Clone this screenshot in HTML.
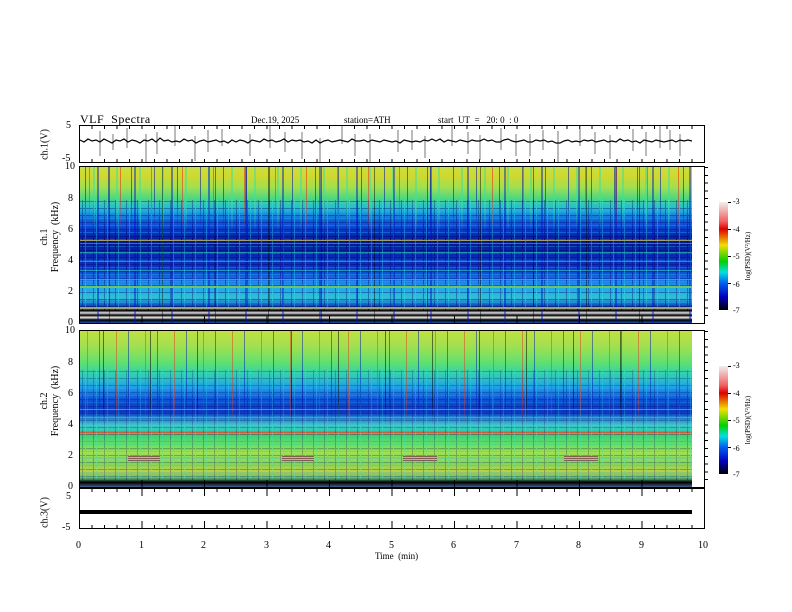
<!DOCTYPE html>
<html><head><meta charset="utf-8"><style>
body{margin:0;width:792px;height:612px;background:#fff;position:relative;overflow:hidden;font-family:"Liberation Serif",serif;color:#000}
.a{position:absolute}
.t{position:absolute;font-size:10px;line-height:10px}
.frame{position:absolute;border:1px solid #000;box-sizing:border-box}
.sp{position:absolute;left:80px;width:612px;overflow:hidden}
.xt{position:absolute;left:79px;width:625px;height:4px;background:repeating-linear-gradient(90deg,#000 0 1px,transparent 1px 12.5px)}
.xT{position:absolute;left:79px;width:625px;height:8px;background:repeating-linear-gradient(90deg,#000 0 1px,transparent 1px 62.5px)}
.yt{position:absolute;left:704px;width:4px;background:repeating-linear-gradient(180deg,#000 0 1px,transparent 1px 7.8px)}
.rot{position:absolute;transform:rotate(-90deg);transform-origin:center;white-space:nowrap;font-size:10px}
.grain{position:absolute;left:80px;width:612px;opacity:.35;background:repeating-linear-gradient(90deg,transparent 0 2px,#000060 2px 3px,transparent 3px 5px,#30e0e0 5px 6px,transparent 6px 11px),repeating-linear-gradient(180deg,transparent 0 1px,#000050 1px 2px,transparent 2px 4px,#20c0f0 4px 5px,transparent 5px 7px)}
</style></head><body>

<div class="t" style="left:80px;top:114px;font-size:12px;letter-spacing:0.5px">VLF&nbsp; Spectra</div>
<div class="t" style="left:251px;top:115px;font-size:9px">Dec.19, 2025</div>
<div class="t" style="left:344px;top:115px;font-size:9px">station=ATH</div>
<div class="t" style="left:438px;top:115px;font-size:9px">start&nbsp; UT&nbsp; =&nbsp;&nbsp; 20: 0&nbsp; : 0</div>

<!-- ch1 -->
<div class="frame" style="left:79px;top:125px;width:626px;height:38px"></div>
<div class="xt" style="top:125px"></div><div class="xt" style="top:159px"></div>
<svg class="a" style="left:80px;top:126px" width="612" height="36">
<g stroke="#777" stroke-width="1">
<path d="M20 5V30M47 2V22M66 8V36M95 0V20M115 10V35M142 3V20M170 8V30M190 0V22M222 6V33M240 12V36M262 0V18M290 8V36M318 4V26M345 10V32M372 0V20M400 9V34M421 2V24M450 8V30M478 5V36M500 0V20M530 9V33M553 3V25M580 0V22M600 8V30M33 8V24M77 6V28M128 4V26M205 6V26M275 8V30M332 4V24M388 6V28M436 8V30M463 4V24M515 6V28M566 6V30M590 4V24"/>
</g>
<polyline fill="none" stroke="#000" stroke-width="1.2" points="0,14 4,16 8,13 12,15 16,14 20,16 24,13 28,15 32,17 36,14 40,15 44,13 48,16 52,14 56,15 60,17 64,14 68,15 72,13 76,16 80,12 84,15 88,14 92,16 96,15 100,16 104,13 108,15 112,14 116,17 120,15 124,14 128,16 132,15 136,14 140,16 144,15 148,17 152,14 156,16 160,14 164,15 168,17 172,14 176,15 180,16 184,13 188,15 192,14 196,16 200,15 204,13 208,16 212,14 216,15 220,14 224,16 228,15 232,17 236,14 240,17 244,15 248,14 252,16 256,15 260,14 264,15 268,16 272,13 276,15 280,15 284,14 288,16 292,14 296,15 300,16 304,14 308,15 312,16 316,15 320,17 324,14 328,15 332,16 336,15 340,16 344,14 348,15 352,13 356,15 360,13 364,16 368,14 372,15 376,16 380,14 384,15 388,16 392,14 396,15 400,15 404,13 408,15 412,14 416,16 420,16 424,14 428,13 432,15 436,16 440,15 444,14 448,16 452,16 456,14 460,15 464,14 468,16 472,15 476,17 480,17 484,15 488,14 492,16 496,15 500,16 504,14 508,15 512,14 516,16 520,15 524,14 528,16 532,15 536,16 540,13 544,15 548,14 552,16 556,15 560,17 564,14 568,15 572,16 576,14 580,15 584,16 588,15 592,14 596,16 600,14 604,15 608,14 612,15"/>
</svg>
<div class="t" style="left:66px;top:121px">5</div>
<div class="t" style="left:62px;top:154px">-5</div>
<div class="rot" style="left:25px;top:139px;width:40px;text-align:center">ch.1(V)</div>

<!-- spectrogram 1 -->
<div class="frame" style="left:79px;top:166px;width:626px;height:158px"></div>
<div class="sp" style="top:167px;height:156px;background:linear-gradient(180deg,#c8e040 0%,#d0d830 6%,#a0e050 13%,#50d880 20%,#20b8d8 27%,#1060e0 34%,#0830c0 42%,#041890 48%,#0a28b0 56%,#0c30c0 64%,#1870e8 72%,#20a8e8 78%,#30c0d8 84%,#1048c0 89%,#000 92%,#e0e0e0 93.5%,#000 95%,#f0f0f0 96.5%,#000 98%,#2050a0 100%)"></div>
<div class="grain" style="top:200px;height:110px"></div>
<div class="sp" style="top:167px;height:110px;opacity:.55;background:repeating-linear-gradient(90deg,transparent 0 5px,#0018a0 5px 6px,transparent 6px 13px,#40e0a0 13px 15px,transparent 15px 23px),repeating-linear-gradient(90deg,transparent 0 9px,#e03020 9px 10px,transparent 10px 31px);-webkit-mask:linear-gradient(180deg,#000 0,#000 30%,transparent 60%)"></div>
<div class="sp" style="top:167px;height:156px;opacity:.45;background:repeating-linear-gradient(90deg,transparent 0 17px,#0010c0 17px 19px,transparent 19px 37px),repeating-linear-gradient(90deg,transparent 0 29px,#000 29px 30px,transparent 30px 53px)"></div>
<div class="sp" style="top:238px;height:50px;opacity:.6;background:repeating-linear-gradient(180deg,transparent 0 5px,#30d0c0 5px 6px,transparent 6px 9px)"></div>
<div class="a" style="left:80px;top:240px;width:612px;height:1px;background:#a0a060"></div>
<div class="a" style="left:80px;top:286px;width:612px;height:2px;background:#70c070"></div>
<div class="a" style="left:80px;top:307px;width:612px;height:2px;background:#a0a080"></div>
<div class="xT" style="top:316px"></div>
<div class="yt" style="top:167px;height:156px"></div>
<div class="t" style="left:65px;top:162px">10</div><div class="t" style="left:68px;top:194px">8</div><div class="t" style="left:68px;top:225px">6</div><div class="t" style="left:68px;top:256px">4</div><div class="t" style="left:68px;top:287px">2</div><div class="t" style="left:68px;top:318px">0</div>
<div class="rot" style="left:10px;top:226px;width:80px;text-align:center;line-height:11px">ch.1<br>Frequency&nbsp; (kHz)</div>

<!-- spectrogram 2 -->
<div class="frame" style="left:79px;top:330px;width:626px;height:158px"></div>
<div class="sp" style="top:331px;height:156px;background:linear-gradient(180deg,#c0e040 0%,#a0e050 10%,#60e070 20%,#30d0b0 28%,#20a0e8 36%,#1050d8 44%,#0c38c0 52%,#40c0d0 60%,#30d0a0 64%,#e05030 65%,#40d080 67%,#60e060 72%,#a0e050 78%,#80d860 85%,#c0d040 90%,#60c080 94%,#000 97%,#406090 100%)"></div>
<div class="grain" style="top:370px;height:110px;opacity:.25"></div>
<div class="sp" style="top:331px;height:156px;opacity:.5;background:repeating-linear-gradient(90deg,transparent 0 7px,#e04020 7px 8px,transparent 8px 19px,#0020b0 19px 20px,transparent 20px 29px),repeating-linear-gradient(90deg,transparent 0 23px,#000 23px 24px,transparent 24px 47px);-webkit-mask:linear-gradient(180deg,#000 0,#000 45%,transparent 60%)"></div>
<div class="sp" style="top:405px;height:75px;opacity:.6;background:repeating-linear-gradient(180deg,transparent 0 4px,#d0a040 4px 5px,transparent 5px 8px)"></div>
<div class="a" style="left:128px;top:456px;width:32px;height:5px;background:repeating-linear-gradient(180deg,#806050 0 1px,#c0c060 1px 2px)"></div>
<div class="a" style="left:282px;top:456px;width:32px;height:5px;background:repeating-linear-gradient(180deg,#806050 0 1px,#c0c060 1px 2px)"></div>
<div class="a" style="left:403px;top:456px;width:34px;height:5px;background:repeating-linear-gradient(180deg,#806050 0 1px,#c0c060 1px 2px)"></div>
<div class="a" style="left:564px;top:456px;width:34px;height:5px;background:repeating-linear-gradient(180deg,#806050 0 1px,#c0c060 1px 2px)"></div>
<div class="xT" style="top:480px"></div>
<div class="yt" style="top:331px;height:156px"></div>
<div class="t" style="left:65px;top:326px">10</div><div class="t" style="left:68px;top:358px">8</div><div class="t" style="left:68px;top:389px">6</div><div class="t" style="left:68px;top:420px">4</div><div class="t" style="left:68px;top:451px">2</div><div class="t" style="left:68px;top:482px">0</div>
<div class="rot" style="left:10px;top:390px;width:80px;text-align:center;line-height:11px">ch.2<br>Frequency&nbsp; (kHz)</div>

<!-- ch3 -->
<div class="frame" style="left:79px;top:488px;width:626px;height:41px"></div>
<div class="xt" style="top:488px"></div>
<div class="xT" style="top:488px"></div>
<div class="xt" style="top:525px"></div>
<div class="a" style="left:80px;top:510px;width:612px;height:4px;background:#000"></div>
<div class="t" style="left:66px;top:492px">5</div>
<div class="t" style="left:62px;top:523px">-5</div>
<div class="rot" style="left:25px;top:507px;width:40px;text-align:center">ch.3(V)</div>
<div class="xT" style="top:521px"></div>
<div class="t" style="left:76px;top:541px">0</div><div class="t" style="left:139px;top:541px">1</div><div class="t" style="left:201px;top:541px">2</div><div class="t" style="left:264px;top:541px">3</div><div class="t" style="left:326px;top:541px">4</div><div class="t" style="left:389px;top:541px">5</div><div class="t" style="left:451px;top:541px">6</div><div class="t" style="left:514px;top:541px">7</div><div class="t" style="left:576px;top:541px">8</div><div class="t" style="left:639px;top:541px">9</div><div class="t" style="left:698px;top:541px">10</div>
<div class="t" style="left:375px;top:551px;font-size:9px">Time&nbsp; (min)</div>

<!-- colorbars -->
<div class="a" style="left:719px;top:202px;width:9px;height:108px;background:linear-gradient(180deg,#f0f0f0,#f06060 18%,#e00000 25%,#f0e000 40%,#00d000 55%,#00e0e0 65%,#0060f0 75%,#0000c0 88%,#000 100%)"></div>
<div class="a" style="left:728px;top:202px;width:3px;height:108px;background:repeating-linear-gradient(180deg,#000 0 1px,transparent 1px 27px)"></div>
<div class="t" style="left:733px;top:197px;font-size:8px">-3</div><div class="t" style="left:733px;top:225px;font-size:8px">-4</div><div class="t" style="left:733px;top:252px;font-size:8px">-5</div><div class="t" style="left:733px;top:280px;font-size:8px">-6</div><div class="t" style="left:733px;top:306px;font-size:8px">-7</div>
<div class="rot" style="left:708px;top:252px;width:80px;text-align:center;font-size:7px">log(PSD)(V²/Hz)</div>

<div class="a" style="left:719px;top:366px;width:9px;height:108px;background:linear-gradient(180deg,#f0f0f0,#f06060 18%,#e00000 25%,#f0e000 40%,#00d000 55%,#00e0e0 65%,#0060f0 75%,#0000c0 88%,#000 100%)"></div>
<div class="a" style="left:728px;top:366px;width:3px;height:108px;background:repeating-linear-gradient(180deg,#000 0 1px,transparent 1px 27px)"></div>
<div class="t" style="left:733px;top:361px;font-size:8px">-3</div><div class="t" style="left:733px;top:389px;font-size:8px">-4</div><div class="t" style="left:733px;top:416px;font-size:8px">-5</div><div class="t" style="left:733px;top:444px;font-size:8px">-6</div><div class="t" style="left:733px;top:470px;font-size:8px">-7</div>
<div class="rot" style="left:708px;top:416px;width:80px;text-align:center;font-size:7px">log(PSD)(V²/Hz)</div>
</body></html>
